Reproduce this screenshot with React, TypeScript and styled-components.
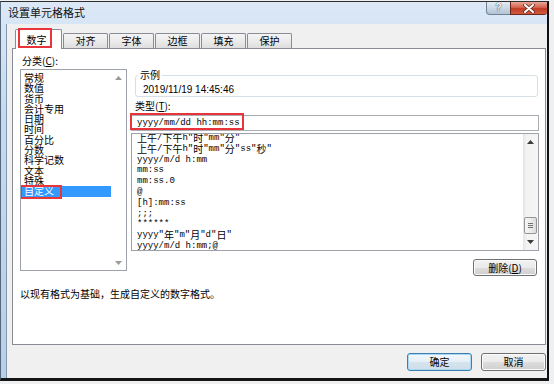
import React from 'react';
import styled, { createGlobalStyle } from 'styled-components';

const categories = ['常规', '数值', '货币', '会计专用', '日期', '时间', '百分比', '分数', '科学记数', '文本', '特殊', '自定义'];

const formats = [
  '上午/下午h"时"mm"分"',
  '上午/下午h"时"mm"分"ss"秒"',
  'yyyy/m/d h:mm',
  'mm:ss',
  'mm:ss.0',
  '@',
  '[h]:mm:ss',
  ';;;',
  '******',
  'yyyy"年"m"月"d"日"',
  'yyyy/m/d h:mm;@',
];

const tabs = ['数字', '对齐', '字体', '边框', '填充', '保护'];

// CJK runs get the bigger size, the rest stays in the mono face
const HAN = /([\u3000-\u303f\u4e00-\u9fff\uff00-\uffef]+)/;

const Mixed: React.FC<{ text: string }> = ({ text }) => (
  <>{text.split(HAN).map((part, i) => (i % 2 === 1 ? <Han key={i}>{part}</Han> : part))}</>
);

const Arrow: React.FC<{ down?: boolean; color: string }> = ({ down, color }) => (
  <svg width="7" height="4" viewBox="0 0 7 4">
    <polygon points={down ? '0,0 7,0 3.5,4' : '0,4 7,4 3.5,0'} fill={color} />
  </svg>
);

const App: React.FC = () => {
  return (
    <>
      <GlobalStyle />
      <Window>
        <TitleBar>
          <Title>设置单元格格式</Title>
          <HelpBtn>?</HelpBtn>
          <CloseBtn>
            <svg width="12" height="9" viewBox="0 0 12 9">
              <path d="M2 1 L10 8 M10 1 L2 8" stroke="#5a2418" strokeWidth="3.4" strokeLinecap="round" />
              <path d="M2 1 L10 8 M10 1 L2 8" stroke="#fff" strokeWidth="2" strokeLinecap="round" />
            </svg>
          </CloseBtn>
        </TitleBar>
        <Body>
          <TabRow>
            {tabs.map((t, i) => (
              <Tab key={t} $active={i === 0}>
                {t}
                {i === 0 && <Mark $left={2} $top={-2} $w={34} $h={20} />}
              </Tab>
            ))}
          </TabRow>
          <Panel>
            <LeftCol>
              <FieldLabel>
                分类(<u>C</u>):
              </FieldLabel>
              <CategoryList>
                <CategoryItems>
                  {categories.map((c, i) => (
                    <CategoryItem key={c} $selected={i === categories.length - 1}>
                      {c}
                      {i === categories.length - 1 && <Mark $left={-2} $top={-1} $w={42} $h={14} />}
                    </CategoryItem>
                  ))}
                </CategoryItems>
                <ScrollBar $disabled>
                  <ArrowBox>
                    <Arrow color="#9a9a9a" />
                  </ArrowBox>
                  <Track />
                  <ArrowBox>
                    <Arrow down color="#9a9a9a" />
                  </ArrowBox>
                </ScrollBar>
              </CategoryList>
            </LeftCol>
            <RightCol>
              <Sample>
                <legend>示例</legend>
                <SampleValue>2019/11/19 14:45:46</SampleValue>
              </Sample>
              <FieldLabel $indent>
                类型(<u>T</u>):
              </FieldLabel>
              <TypeInput>
                yyyy/mm/dd hh:mm:ss
                <Mark $left={-2} $top={-3} $w={114} $h={17} />
              </TypeInput>
              <FormatList>
                <FormatItems>
                  {formats.map((f) => (
                    <FormatItem key={f}>
                      <Mixed text={f} />
                    </FormatItem>
                  ))}
                </FormatItems>
                <ScrollBar>
                  <ArrowBox>
                    <Arrow color="#3c3c3c" />
                  </ArrowBox>
                  <Track>
                    <Thumb>
                      <i />
                      <i />
                      <i />
                    </Thumb>
                  </Track>
                  <ArrowBox $tall>
                    <Arrow down color="#3c3c3c" />
                  </ArrowBox>
                </ScrollBar>
              </FormatList>
              <DeleteBtn>
                删除(<u>D</u>)
              </DeleteBtn>
            </RightCol>
            <Hint>以现有格式为基础，生成自定义的数字格式。</Hint>
          </Panel>
          <Footer>
            <Button $primary>确定</Button>
            <Button>取消</Button>
          </Footer>
        </Body>
      </Window>
    </>
  );
};

export default App;

const GlobalStyle = createGlobalStyle`
  html, body {
    margin: 0;
    padding: 0;
    background: #eef0f2;
  }
  body {
    font-family: "Noto Sans CJK SC", "Noto Sans", sans-serif;
    font-size: 10px;
    color: #000;
  }
`;

const Window = styled.div`
  width: 549px;
  height: 380px;
  margin-top: 1px;
  box-sizing: border-box;
  border-top: 1px solid #2e2e2e;
  border-left: 1px solid #55677b;
  border-right: 2px solid #111;
  border-bottom: 3px solid #151515;
  background: linear-gradient(180deg, #dce8f6 0%, #c6d9ef 30%, #b9cfe8 100%);
  display: flex;
  flex-direction: column;
`;

const TitleBar = styled.div`
  height: 22px;
  flex: none;
  display: flex;
  align-items: flex-start;
  padding-left: 7px;
`;

const Title = styled.div`
  font-size: 11px;
  line-height: 20px;
  color: #111;
`;

const HelpBtn = styled.div`
  margin-left: auto;
  width: 24px;
  height: 13px;
  box-sizing: border-box;
  border: 1px solid #6f8197;
  border-top: none;
  border-right: none;
  border-radius: 0 0 0 4px;
  background: linear-gradient(180deg, #e4ecf5 0%, #cbd8e6 50%, #b3c3d6 100%);
  color: #fff;
  font: bold 10px/12px "Liberation Sans", sans-serif;
  text-align: center;
  text-shadow: 0 0 1px #2c3e55, 0 0 1px #2c3e55;
`;

const CloseBtn = styled.div`
  width: 37px;
  height: 13px;
  box-sizing: border-box;
  border: 1px solid #6b271c;
  border-top: none;
  border-right: none;
  border-radius: 0 0 3px 0;
  background: linear-gradient(180deg, #e8a898 0%, #d5634d 45%, #c13b25 55%, #cf5a3e 100%);
  display: flex;
  align-items: center;
  justify-content: center;
`;

const Body = styled.div`
  flex: 1;
  margin-left: 5px;
  border-left: 1px solid #8398b1;
  background: #f0f0f0;
  display: flex;
  flex-direction: column;
  padding-top: 5px;
`;

const TabRow = styled.div`
  height: 19px;
  display: flex;
  align-items: flex-end;
  padding-left: 8px;
  position: relative;
  z-index: 1;
`;

const Tab = styled.div<{ $active?: boolean }>`
  position: relative;
  box-sizing: border-box;
  width: ${(p) => (p.$active ? 47 : 45)}px;
  height: ${(p) => (p.$active ? 20 : 15)}px;
  margin-left: ${(p) => (p.$active ? 0 : 1)}px;
  margin-bottom: ${(p) => (p.$active ? -1 : 0)}px;
  padding: ${(p) => (p.$active ? '3px 4px 0 0' : '0')};
  border: 1px solid #898c95;
  border-bottom: none;
  border-radius: 2px 2px 0 0;
  background: ${(p) => (p.$active ? '#fff' : 'linear-gradient(180deg, #f4f4f4 0%, #ebebeb 50%, #dedede 100%)')};
  text-align: center;
  line-height: 14px;
`;

const Mark = styled.span<{ $left: number; $top: number; $w: number; $h: number }>`
  position: absolute;
  left: ${(p) => p.$left}px;
  top: ${(p) => p.$top}px;
  width: ${(p) => p.$w}px;
  height: ${(p) => p.$h}px;
  box-sizing: border-box;
  border: 2px solid #e8343a;
  pointer-events: none;
`;

const Panel = styled.div`
  margin: 0 1px 0 5px;
  height: 297px;
  box-sizing: border-box;
  border: 1px solid #898c95;
  background: #fff;
  display: grid;
  grid-template-columns: 107px 408px;
  column-gap: 4px;
  align-content: start;
  padding: 6px 6px 0 7px;
`;

const LeftCol = styled.div`
  display: flex;
  flex-direction: column;
`;

const RightCol = styled.div`
  display: flex;
  flex-direction: column;
`;

const FieldLabel = styled.div<{ $indent?: boolean }>`
  line-height: 12px;
  height: 12px;
  padding-left: ${(p) => (p.$indent ? 4 : 2)}px;
  margin-top: ${(p) => (p.$indent ? 3 : 0)}px;
`;

const CategoryList = styled.div`
  margin-top: 2px;
  height: 202px;
  box-sizing: border-box;
  border: 1px solid #9da2aa;
  display: flex;
`;

const CategoryItems = styled.div`
  flex: 1;
  padding-top: 3px;
  overflow: hidden;
`;

const CategoryItem = styled.div<{ $selected?: boolean }>`
  position: relative;
  height: 10.3px;
  line-height: 10.3px;
  margin-left: 1px;
  padding-left: 2px;
  white-space: nowrap;
  background: ${(p) => (p.$selected ? '#3399ff' : 'transparent')};
  color: ${(p) => (p.$selected ? '#fff' : '#000')};
`;

const ScrollBar = styled.div<{ $disabled?: boolean }>`
  width: 15px;
  flex: none;
  display: flex;
  flex-direction: column;
  background: ${(p) => (p.$disabled ? '#fff' : 'linear-gradient(90deg, #e4e4e4 0%, #f3f3f3 25%, #f5f5f5 100%)')};
`;

const ArrowBox = styled.div<{ $tall?: boolean }>`
  height: ${(p) => (p.$tall ? 16 : 15)}px;
  flex: none;
  display: flex;
  align-items: center;
  justify-content: center;
`;

const Track = styled.div`
  flex: 1;
  display: flex;
  flex-direction: column;
  justify-content: flex-end;
  align-items: center;
`;

const Thumb = styled.div`
  width: 13px;
  height: 17px;
  box-sizing: border-box;
  border: 1px solid #949494;
  border-radius: 2px;
  background: linear-gradient(90deg, #f6f6f6 0%, #ececec 50%, #dcdcdc 100%);
  display: flex;
  flex-direction: column;
  align-items: center;
  justify-content: center;
  gap: 1px;
  > i {
    display: block;
    width: 5px;
    height: 1px;
    background: #707070;
  }
`;

const Sample = styled.fieldset`
  margin: 14px 1px 0 4px;
  padding: 3px 0 0 7px;
  border: 1px solid #d5dfe5;
  border-radius: 3px;
  min-width: 0;
  > legend {
    padding: 0 2px;
    margin-left: -5px;
    line-height: 12px;
  }
`;

const SampleValue = styled.div`
  font-family: "Liberation Sans", sans-serif;
  font-size: 10px;
  line-height: 12px;
  height: 12px;
`;

const Mono = `
  font-family: "Liberation Mono", "Noto Sans CJK SC", monospace;
  font-size: 9px;
`;

const TypeInput = styled.div`
  position: relative;
  margin-top: 3px;
  height: 16px;
  box-sizing: border-box;
  border: 1px solid #abadb3;
  padding-left: 5px;
  line-height: 14px;
  ${Mono}
`;

const FormatList = styled.div`
  margin-top: 2px;
  height: 118px;
  box-sizing: border-box;
  border: 1px solid #9da2aa;
  display: flex;
`;

const FormatItems = styled.div`
  flex: 1;
  overflow: hidden;
  padding-left: 5px;
`;

const FormatItem = styled.div`
  height: 10.8px;
  line-height: 10.8px;
  white-space: nowrap;
  ${Mono}
  &:first-child {
    margin-top: -1px;
  }
`;

const Han = styled.span`
  font-family: "Noto Sans CJK SC", sans-serif;
  font-size: 10px;
  line-height: 10.8px;
  vertical-align: top;
`;

const Button = styled.div<{ $primary?: boolean }>`
  width: 65px;
  height: 18px;
  box-sizing: border-box;
  border: 1px solid ${(p) => (p.$primary ? '#3c7fb1' : '#707070')};
  border-radius: 3px;
  background: ${(p) =>
    p.$primary
      ? 'linear-gradient(180deg, #f3f8fc 0%, #e6eff6 50%, #d6e4ee 51%, #cfdde8 100%)'
      : 'linear-gradient(180deg, #f2f2f2 0%, #ebebeb 50%, #dddddd 51%, #cfcfcf 100%)'};
  box-shadow: ${(p) => (p.$primary ? 'inset 0 0 0 1px #a9d8f5' : 'inset 0 0 0 1px #fbfbfb')};
  text-align: center;
  line-height: 16px;
`;

const DeleteBtn = styled(Button)`
  width: 64px;
  height: 17px;
  line-height: 15px;
  margin-top: 8px;
  margin-right: 2px;
  align-self: flex-end;
`;

const Hint = styled.div`
  grid-column: 1 / -1;
  margin-top: 12px;
  line-height: 12px;
`;

const Footer = styled.div`
  margin-top: 8px;
  padding-right: 1px;
  display: flex;
  justify-content: flex-end;
  gap: 9px;
`;
